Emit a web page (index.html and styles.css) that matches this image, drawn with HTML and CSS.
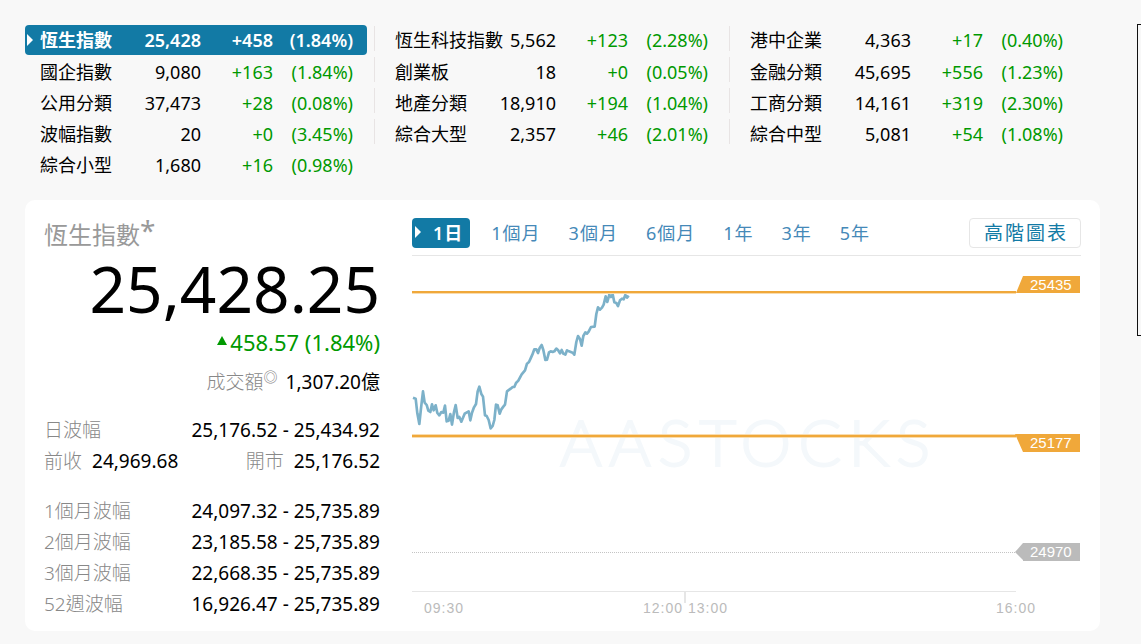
FILE: index.html
```html
<!DOCTYPE html>
<html lang="zh-HK">
<head>
<meta charset="utf-8">
<meta name="viewport" content="width=device-width, initial-scale=1">
<title>恆生指數</title>
<link rel="stylesheet" href="styles.css">
</head>
<body>
<div class="page">
<main class="content">
  <section class="indices" aria-label="指數">
    <table class="index-table">
      <tr class="selected"><th scope="row">恆生指數</th><td class="price">25,428</td><td class="change">+458</td><td class="percent">(1.84%)</td></tr>
      <tr><th scope="row">國企指數</th><td class="price">9,080</td><td class="change">+163</td><td class="percent">(1.84%)</td></tr>
      <tr><th scope="row">公用分類</th><td class="price">37,473</td><td class="change">+28</td><td class="percent">(0.08%)</td></tr>
      <tr><th scope="row">波幅指數</th><td class="price">20</td><td class="change">+0</td><td class="percent">(3.45%)</td></tr>
      <tr class="undivided"><th scope="row">綜合小型</th><td class="price">1,680</td><td class="change">+16</td><td class="percent">(0.98%)</td></tr>
    </table>
    <table class="index-table">
      <tr><th scope="row">恆生科技指數</th><td class="price">5,562</td><td class="change">+123</td><td class="percent">(2.28%)</td></tr>
      <tr><th scope="row">創業板</th><td class="price">18</td><td class="change">+0</td><td class="percent">(0.05%)</td></tr>
      <tr><th scope="row">地產分類</th><td class="price">18,910</td><td class="change">+194</td><td class="percent">(1.04%)</td></tr>
      <tr><th scope="row">綜合大型</th><td class="price">2,357</td><td class="change">+46</td><td class="percent">(2.01%)</td></tr>
    </table>
    <table class="index-table">
      <tr class="undivided"><th scope="row">港中企業</th><td class="price">4,363</td><td class="change">+17</td><td class="percent">(0.40%)</td></tr>
      <tr class="undivided"><th scope="row">金融分類</th><td class="price">45,695</td><td class="change">+556</td><td class="percent">(1.23%)</td></tr>
      <tr class="undivided"><th scope="row">工商分類</th><td class="price">14,161</td><td class="change">+319</td><td class="percent">(2.30%)</td></tr>
      <tr class="undivided"><th scope="row">綜合中型</th><td class="price">5,081</td><td class="change">+54</td><td class="percent">(1.08%)</td></tr>
    </table>
  </section>

  <section class="card">
    <div class="quote">
      <h1 class="quote-name">恆生指數<sup>*</sup></h1>
      <div class="quote-last">25,428.25</div>
      <div class="quote-change"><svg class="up" viewBox="0 0 10 9" aria-hidden="true"><path d="M5 0 10 9H0z"/></svg>458.57 (1.84%)</div>
      <div class="turnover"><span class="label">成交額<sup>◎</sup></span><span>1,307.20億</span></div>
      <dl class="stats">
        <div class="stat"><dt>日波幅</dt><dd>25,176.52 - 25,434.92</dd></div>
        <div class="stat-pair">
          <div class="stat"><dt>前收</dt><dd>24,969.68</dd></div>
          <div class="stat"><dt>開市</dt><dd>25,176.52</dd></div>
        </div>
      </dl>
      <dl class="stats ranges">
        <div class="stat"><dt>1個月波幅</dt><dd>24,097.32 - 25,735.89</dd></div>
        <div class="stat"><dt>2個月波幅</dt><dd>23,185.58 - 25,735.89</dd></div>
        <div class="stat"><dt>3個月波幅</dt><dd>22,668.35 - 25,735.89</dd></div>
        <div class="stat"><dt>52週波幅</dt><dd>16,926.47 - 25,735.89</dd></div>
      </dl>
    </div>

    <div class="chart">
      <div class="toolbar">
        <nav class="periods" aria-label="時段">
          <a class="period active" href="#1d">1日</a>
          <a class="period" href="#1m">1個月</a>
          <a class="period" href="#3m">3個月</a>
          <a class="period" href="#6m">6個月</a>
          <a class="period" href="#1y">1年</a>
          <a class="period" href="#3y">3年</a>
          <a class="period" href="#5y">5年</a>
        </nav>
        <a class="advanced" href="#advanced">高階圖表</a>
      </div>
      <svg class="plot" viewBox="0 0 669 363" role="img" aria-label="恆生指數走勢">
        <text class="watermark" x="148" y="210">AASTOCKS</text>
        <g class="trend" transform="translate(-12 24) scale(.33333)">
          <polyline points="39,353 47,356 52,400 58,432 63,385 69,334 74,368 80,375 85,392 91,396 96,373 101,391 107,376 112,399 118,406 124,396 130,398 135,377 140,424 146,422 151,402 156,434 162,396 167,375 173,414 178,411 184,425 194,401 206,394 211,421 216,398 222,382 228,372 233,334 238,320 244,342 249,350 255,406 260,408 266,420 272,445 278,438 283,420 288,374 293,376 299,401 304,388 310,380 315,374 321,334 332,326 338,321 343,321 348,309 355,302 365,283 375,271 381,251 387,246 392,235 397,224 403,208 409,208 414,219 419,204 425,195 430,210 436,240 441,239 447,217 452,214 458,216 463,214 469,206 474,210 480,220 485,210 490,221 496,224 501,211 507,214 518,218 523,224 529,186 534,168 540,177 545,197 550,168 556,157 561,161 566,155 573,141 584,140 589,102 594,82 600,89 606,83 611,74 617,49 622,66 628,44 633,51 638,43 643,67 649,69 654,78 660,61 666,56 671,58 676,45 681,53 686,47"/>
        </g>
        <g class="limit">
          <path class="edge" d="M0 35h604v3H0zM0 178h604v4H0z"/>
          <path d="M0 35h604v2H0zM0 179h604v2H0z"/>
          <path d="M604 37 611 20h57v17zM603 178h65v18h-57z"/>
        </g>
        <path class="previous-line" d="M0 296.500H604"/>
        <path class="previous-tag" d="M603 296l8-9h57v18h-57v-1z"/>
        <path class="axis" d="M0 335h604v1H0zM272 336h2v11h-2z"/>
        <g class="tag-text">
          <text x="618" y="34">25435</text>
          <text x="618" y="192">25177</text>
          <text x="618" y="301">24970</text>
        </g>
        <g class="axis-text">
          <text x="12" y="357">09:30</text>
          <text x="231" y="357">12:00</text>
          <text x="276" y="357">13:00</text>
          <text x="584" y="357">16:00</text>
        </g>
      </svg>
    </div>
  </section>
</main>
<aside class="side-frame" aria-label="廣告"></aside>
</div>
</body>
</html>
```
FILE: styles.css
```css
* { box-sizing: border-box; }

body {
  margin: 0;
  background: #f8f8f8;
  color: #000;
  font-family: "Noto Sans", "Noto Sans CJK TC", sans-serif;
  font-size: 18px;
}

a { text-decoration: none; }

.page {
  display: flex;
  align-items: flex-start;
  gap: 37px;
  padding: 24px 0 12px 25px;
}

.content { flex: 1; min-width: 0; }

.side-frame {
  width: 4px;
  height: 312px;
  border: solid #111;
  border-width: 1px 0 1px 1px;
}

/* Index summary */
.indices {
  display: grid;
  grid-template-columns: repeat(3, 1fr);
  align-items: start;
  gap: 13px;
  padding-right: 23px;
}

.index-table {
  width: 100%;
  table-layout: fixed;
  border-spacing: 0 1px;
}

.index-table th,
.index-table td {
  height: 30px;
  padding: 0;
  line-height: 30px;
  text-align: right;
  white-space: nowrap;
}

.index-table tr:not(:first-child) > * {
  padding-top: 2px;
  line-height: 28px;
}

.index-table th {
  position: relative;
  width: 112px;
  padding-left: 15px;
  font-weight: 400;
  text-align: left;
}

.index-table .price { width: 64px; }
.index-table .change { width: 72px; color: #090; }
.index-table .percent {
  position: relative;
  padding-right: 14px;
  color: #090;
}

.percent::after {
  content: "";
  position: absolute;
  top: 1px;
  right: -8px;
  width: 1px;
  height: 25px;
  background: #e8e4e4;
}

.undivided .percent::after { display: none; }

.index-table .selected > * {
  background: #127aa5;
  color: #fff;
  font-weight: 600;
}

.selected th { border-radius: 4px 0 0 4px; }
.selected .percent { border-radius: 0 4px 4px 0; }

.selected th::before,
.period.active::before {
  content: "";
  position: absolute;
  top: 9px;
  left: 2px;
  border: solid transparent;
  border-width: 6px 0 6px 6px;
  border-left-color: #fff;
}

/* Quote card */
.card {
  display: grid;
  grid-template-columns: 336px 1fr;
  gap: 32px;
  margin-top: 20px;
  padding: 18px 19px 11px;
  border-radius: 10px;
  background: #fff;
}

.quote { white-space: nowrap; }

.quote-name {
  margin: 0;
  color: #999;
  font-size: 24px;
  font-weight: 400;
  line-height: 34px;
}

.quote-name sup {
  font-size: 28px;
  line-height: 0;
  vertical-align: 3px;
}

.quote-last {
  font-size: 64px;
  line-height: 74px;
  text-align: right;
}

.quote-change {
  color: #090;
  font-size: 22px;
  line-height: 32px;
  text-align: right;
}

.up {
  width: 10px;
  height: 9px;
  margin-right: 3px;
  vertical-align: 6px;
  fill: #090;
}

.turnover {
  display: flex;
  justify-content: flex-end;
  gap: 8px;
  font-size: 19px;
  line-height: 48px;
}

.label,
.stat dt { color: #888; font-weight: 300; }

.label sup {
  font-size: 14px;
  font-weight: 500;
  line-height: 0;
  vertical-align: 7px;
}

.stats {
  margin: 9px 0 0;
  font-size: 19px;
  line-height: 31px;
}

.ranges { margin-top: 19px; }

.stat,
.stat-pair {
  display: flex;
  justify-content: space-between;
}

.stat-pair .stat { gap: 10px; }
.stat dd { margin: 0; }

/* Chart */
.chart { min-width: 0; }

.toolbar {
  display: flex;
  align-items: center;
  justify-content: space-between;
  padding-bottom: 7px;
  border-bottom: 1px solid #e6e6e6;
}

.periods { display: flex; }

.period {
  position: relative;
  padding: 0 7px 0 21px;
  border-radius: 4px;
  color: #4589b8;
  letter-spacing: 1px;
  line-height: 30px;
}

.period.active {
  background: #127aa5;
  color: #fff;
  font-weight: 600;
}

.period.active::before { top: 8px; left: 3px; }

.advanced {
  padding: 0 12px 0 14px;
  border: 1px solid #e6e6e6;
  border-radius: 4px;
  color: #127aa5;
  font-size: 19px;
  letter-spacing: 2px;
  line-height: 28px;
}

.plot {
  display: block;
  width: 100%;
  height: auto;
  font-family: "Liberation Sans", Arial, sans-serif;
}

.watermark {
  fill: #f4f8fb;
  stroke: #f4f8fb;
  stroke-width: 2;
  font-family: Lato, sans-serif;
  font-size: 64px;
  font-weight: 300;
  letter-spacing: 7px;
}

.trend {
  fill: none;
  stroke: #7cb1c9;
  stroke-width: 8;
  stroke-linejoin: round;
}

.limit { fill: #f0a83a; }
.limit .edge { fill: #f9dcae; }
.previous-line { stroke: #c4c4c4; stroke-dasharray: 1 1; }
.previous-tag { fill: #bbb; }
.axis { fill: #e6e6e6; }
.tag-text { fill: #fff; font-size: 15px; }
.axis-text { fill: #bbb; font-size: 14px; letter-spacing: 1px; }
```
